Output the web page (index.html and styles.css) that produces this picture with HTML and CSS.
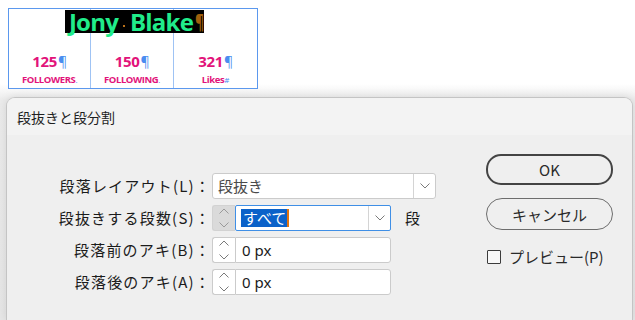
FILE: index.html
```html
<!DOCTYPE html>
<html lang="ja">
<head>
<meta charset="utf-8">
<title>段抜きと段分割</title>
<link rel="stylesheet" href="styles.css">
</head>
<body>
<div class="card">
  <div class="name"><span class="name-text"><span>Jony</span><span class="sp"> </span><span>Blake</span><span class="pil">¶</span></span></div>
  <div class="col"><div class="num">125<span class="mk">¶</span></div><div class="lbl">FOLLOWERS<span class="mk">.</span></div></div>
  <div class="col sep"><div class="num">150<span class="mk">¶</span></div><div class="lbl">FOLLOWING<span class="mk">.</span></div></div>
  <div class="col sep"><div class="num">321<span class="mk">¶</span></div><div class="lbl">Likes<span class="mk">#</span></div></div>
</div>

<div class="dialog">
  <div class="titlebar">段抜きと段分割</div>
  <div class="dbody">
    <div class="form">
      <div class="flabel">段落レイアウト(L)：</div>
      <div class="ctrl">
        <div class="select wide"><span class="val muted">段抜き</span><span class="arrow"><svg width="10" height="6" viewBox="0 0 10 6"><polyline points="0.5,0.5 5,5 9.5,0.5" fill="none" stroke="#7a7a7a" stroke-width="1"/></svg></span></div>
      </div>

      <div class="flabel">段抜きする段数(S)：</div>
      <div class="ctrl">
        <div class="spin disabled"><svg width="10" height="20" viewBox="0 0 10 20"><polyline points="0.5,5.5 5,1 9.5,5.5" fill="none" stroke="#9a9a9a"/><polyline points="0.5,14.5 5,19 9.5,14.5" fill="none" stroke="#9a9a9a"/></svg></div>
        <div class="select combo focus"><span class="val"><span class="sel">すべて</span><span class="caret"></span></span><span class="arrow"><svg width="10" height="6" viewBox="0 0 10 6"><polyline points="0.5,0.5 5,5 9.5,0.5" fill="none" stroke="#7a7a7a" stroke-width="1"/></svg></span></div>
        <span class="unit">段</span>
      </div>

      <div class="flabel">段落前のアキ(B)：</div>
      <div class="ctrl">
        <div class="spin"><svg width="10" height="20" viewBox="0 0 10 20"><polyline points="0.5,5.5 5,1 9.5,5.5" fill="none" stroke="#7a7a7a"/><polyline points="0.5,14.5 5,19 9.5,14.5" fill="none" stroke="#7a7a7a"/></svg></div>
        <div class="field">0 px</div>
      </div>

      <div class="flabel">段落後のアキ(A)：</div>
      <div class="ctrl">
        <div class="spin"><svg width="10" height="20" viewBox="0 0 10 20"><polyline points="0.5,5.5 5,1 9.5,5.5" fill="none" stroke="#7a7a7a"/><polyline points="0.5,14.5 5,19 9.5,14.5" fill="none" stroke="#7a7a7a"/></svg></div>
        <div class="field">0 px</div>
      </div>
    </div>

    <div class="actions">
      <button class="btn primary">OK</button>
      <button class="btn">キャンセル</button>
      <label class="check"><span class="box"></span><span>プレビュー(P)</span></label>
    </div>
  </div>
</div>
</body>
</html>
```

FILE: styles.css
```css
* { box-sizing: border-box; }

html, body { margin: 0; padding: 0; }

body {
  width: 635px;
  height: 320px;
  overflow: hidden;
  background: linear-gradient(#ffffff 0, #ffffff 84px, #ebebeb 100px, #e6e6e6 100%);
  font-family: "Noto Sans CJK JP", "Noto Sans", sans-serif;
}

/* ---------- profile card ---------- */
.card {
  margin: 8px 0 0 8px;
  width: 250px;
  height: 81px;
  border: 1px solid #5b98ee;
  background: #fff;
  display: grid;
  grid-template-columns: 81px 83px 1fr;
  grid-template-rows: 30px 1fr;
  font-family: "Open Sans", "Liberation Sans", sans-serif;
}

.col {
  grid-row: 1 / 3;
  display: flex;
  flex-direction: column;
  align-items: center;
  justify-content: flex-end;
  padding-bottom: 2px;
}

.col.sep { border-left: 1px solid #9fc3f4; }

.col:nth-of-type(2) { grid-column: 1; }
.col:nth-of-type(3) { grid-column: 2; }
.col:nth-of-type(4) { grid-column: 3; }

.name {
  grid-row: 1;
  grid-column: 1 / -1;
  z-index: 1;
  display: flex;
  justify-content: center;
  padding-top: 1px;
  padding-left: 3px;
}

.name-text {
  display: inline-flex;
  align-items: center;
  background: #000;
  color: #20ec8a;
  font-size: 24px;
  font-weight: 700;
  line-height: 23px;
  height: 23px;
  padding: 0 1px 0 4px;
  letter-spacing: -0.8px;
  white-space: nowrap;
}

.name-text > span { flex-shrink: 0; }

.name-text .sp {
  width: 12px;
  height: 23px;
  font-size: 10px;
  display: flex;
  align-items: flex-end;
  justify-content: center;
  padding-bottom: 6px;
}

.name-text .sp::after {
  content: "";
  width: 2px;
  height: 2px;
  background: #b8701a;
}

.name-text .pil {
  color: #a0600c;
  font-size: 20px;
  font-weight: 700;
  width: 8px;
  margin-left: 2px;
  letter-spacing: 0;
  transform: scaleX(0.7);
  transform-origin: left center;
}

.num {
  color: #e2137a;
  font-size: 15px;
  font-weight: 700;
  line-height: 16px;
  letter-spacing: -0.4px;
}

.lbl {
  color: #e2137a;
  font-size: 9.5px;
  font-weight: 700;
  line-height: 12px;
  margin-top: 4px;
  letter-spacing: -0.4px;
}

.mk {
  color: #4a8df0;
  font-weight: 400;
}

.num .mk { font-size: 14px; margin-left: 1px; }
.lbl .mk { font-size: 8px; }

/* ---------- dialog ---------- */
.dialog {
  margin: 8px 0 0 6px;
  width: 627px;
  height: 223px;
  border: 1px solid #c4c4c4;
  border-bottom: none;
  border-radius: 9px 9px 0 0;
  background: #efefef;
  box-shadow: 0 0 10px rgba(0, 0, 0, 0.10);
  overflow: hidden;
  color: #1b1b1b;
}

.titlebar {
  height: 37px;
  background: #f3f3f3;
  padding-left: 10px;
  font-size: 14px;
  padding-top: 1px;
  line-height: 36px;
  color: #1f1f1f;
}

.dbody {
  display: flex;
  align-items: flex-start;
}

.form {
  margin-top: 38px;
  display: grid;
  grid-template-columns: 202px auto;
  grid-auto-rows: 26px;
  column-gap: 3px;
  row-gap: 6px;
}

.flabel {
  text-align: right;
  font-size: 15px;
  letter-spacing: 1.2px;
  line-height: 26px;
  white-space: nowrap;
  margin-right: -2px;
}

.ctrl {
  display: flex;
  align-items: stretch;
}

.select {
  display: flex;
  background: #fff;
  border: 1px solid #cbcbcb;
  border-radius: 3px;
  font-size: 15px;
}

.select.wide { width: 224px; }

.select .val {
  flex: 1;
  padding-left: 5px;
  line-height: 24px;
  display: flex;
  align-items: center;
}

.select .val.muted { color: #4a4a4a; }

.select .arrow {
  width: 22px;
  border-left: 1px solid #d4d4d4;
  display: flex;
  align-items: center;
  justify-content: center;
}

.select.combo {
  width: 156px;
  border-radius: 2px;
}

.select.focus { border-color: #3f8fe6; }

.select.combo .val { padding-left: 5px; }

.sel {
  background: #0b62c9;
  color: #fff;
  line-height: 18px;
  height: 18px;
  padding: 0 1px 0 2px;
}

.caret {
  display: inline-block;
  width: 2px;
  height: 18px;
  background: #e2720c;
}

.spin {
  width: 23px;
  background: #fff;
  border: 1px solid #cbcbcb;
  border-right: none;
  border-radius: 3px 0 0 3px;
  display: flex;
  align-items: center;
  justify-content: center;
}

.spin.disabled {
  background: #dadada;
  border-color: #d2d2d2;
}

.field {
  width: 156px;
  background: #fff;
  border: 1px solid #cbcbcb;
  border-radius: 0 3px 3px 0;
  font-size: 15px;
  line-height: 24px;
  padding-left: 6px;
  font-family: "Noto Sans", "Noto Sans CJK JP", sans-serif;
}

.unit {
  font-size: 15px;
  line-height: 26px;
  margin-left: 14px;
}

/* ---------- actions ---------- */
.actions {
  margin-left: auto;
  margin-right: 19px;
  margin-top: 19px;
  width: 127px;
  display: flex;
  flex-direction: column;
}

.btn {
  font-family: "Noto Sans CJK JP", "Noto Sans", sans-serif;
  font-size: 15px;
  color: #2a2a2a;
  background: #efefef;
  height: 32px;
  border: 1px solid #6d6d6d;
  border-radius: 16px;
  padding: 0;
}

.btn.primary {
  height: 31px;
  border: 2px solid #444;
  border-radius: 15px;
}

.btn + .btn { margin-top: 13px; }

.check {
  margin-top: 16px;
  display: flex;
  align-items: center;
  font-size: 15px;
  color: #2a2a2a;
  padding-left: 1px;
}

.check .box {
  width: 14px;
  height: 14px;
  border: 1px solid #3c3c3c;
  border-radius: 1px;
  background: #f8f8f8;
  margin-right: 8px;
}
```
